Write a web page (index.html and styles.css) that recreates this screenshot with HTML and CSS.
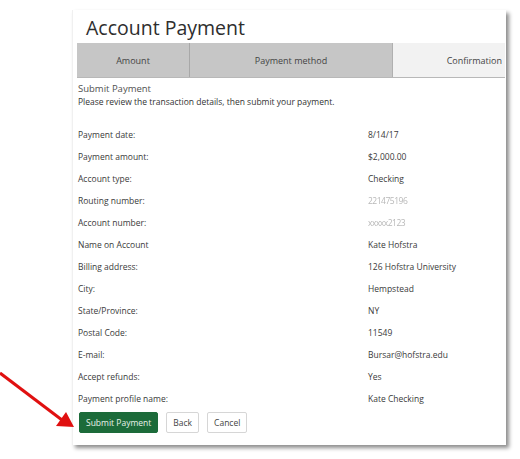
FILE: index.html
```html
<!DOCTYPE html>
<html lang="en">
<head>
<meta charset="utf-8">
<title>Account Payment</title>
<link rel="stylesheet" href="styles.css">
</head>
<body>
<div class="stage">
  <svg class="arrow" width="80" height="70" viewBox="0 0 80 70" aria-hidden="true">
    <line x1="0" y1="13" x2="62" y2="60" stroke="#e01010" stroke-width="3"/>
    <polygon points="74,67 56,66 66,52" fill="#e01010"/>
  </svg>
  <div class="card">
    <h1 class="title">Account Payment</h1>
    <div class="tabs">
      <div class="tab tab-amount">Amount</div>
      <div class="tab tab-method">Payment method</div>
      <div class="tab tab-confirm">Confirmation</div>
    </div>
    <div class="content">
      <h2 class="subtitle">Submit Payment</h2>
      <p class="intro">Please review the transaction details, then submit your payment.</p>
      <dl class="details">
        <dt>Payment date:</dt><dd>8/14/17</dd>
        <dt>Payment amount:</dt><dd>$2,000.00</dd>
        <dt>Account type:</dt><dd>Checking</dd>
        <dt>Routing number:</dt><dd><span class="blurred">221475196</span></dd>
        <dt>Account number:</dt><dd><span class="blurred">xxxxx2123</span></dd>
        <dt>Name on Account</dt><dd>Kate Hofstra</dd>
        <dt>Billing address:</dt><dd>126 Hofstra University</dd>
        <dt>City:</dt><dd>Hempstead</dd>
        <dt>State/Province:</dt><dd>NY</dd>
        <dt>Postal Code:</dt><dd>11549</dd>
        <dt>E-mail:</dt><dd>Bursar@hofstra.edu</dd>
        <dt>Accept refunds:</dt><dd>Yes</dd>
        <dt>Payment profile name:</dt><dd>Kate Checking</dd>
      </dl>
      <div class="actions">
        <button class="btn btn-primary">Submit Payment</button>
        <button class="btn">Back</button>
        <button class="btn">Cancel</button>
      </div>
    </div>
  </div>
</div>
</body>
</html>
```

FILE: styles.css
```css
html, body {
  margin: 0;
  padding: 0;
  background: #ffffff;
}
body {
  font-family: "Open Sans", "Noto Sans", sans-serif;
  color: #333333;
  width: 520px;
  height: 459px;
  overflow: hidden;
}
.stage {
  position: relative;
  padding: 10px 0 0 72px;
}
.arrow {
  position: absolute;
  left: 0;
  top: 360px;
}
.card {
  width: 434px;
  height: 435px;
  box-sizing: border-box;
  background: #ffffff;
  border-left: 1px solid #f0f0f0;
  box-shadow: 3px 3px 4px rgba(0, 0, 0, 0.45);
  padding: 0 1px 0 4px;
  display: flex;
  flex-direction: column;
}
.title {
  margin: 0;
  padding: 3px 0 0 9px;
  font-size: 19.5px;
  font-weight: 400;
  line-height: 30px;
  color: #2e2e2e;
}
.tabs {
  display: flex;
  height: 35px;
  border-bottom: 1px solid #b8b8b8;
  box-sizing: border-box;
}
.tab {
  display: flex;
  align-items: center;
  justify-content: center;
  font-size: 9px;
  color: #444444;
  box-sizing: border-box;
}
.tab-amount {
  width: 113px;
  background: #c6c6c6;
  border-right: 1px solid #a8a8a8;
}
.tab-method {
  width: 203px;
  background: #c6c6c6;
  border-right: 1px solid #b0b0b0;
}
.tab-confirm {
  flex: 1;
  background: #f2f2f2;
  justify-content: flex-end;
  padding-right: 3px;
}
.content {
  padding: 4px 0 0 1px;
}
.subtitle {
  margin: 0;
  font-size: 9.5px;
  font-weight: 400;
  line-height: 14px;
  color: #505050;
}
.intro {
  margin: 0;
  font-size: 8.5px;
  line-height: 12px;
  color: #333333;
}
.details {
  margin: 15px 0 0 0;
  display: grid;
  grid-template-columns: 290px 1fr;
  grid-auto-rows: 22px;
  align-items: center;
  font-size: 8.5px;
}
.details dt, .details dd {
  margin: 0;
  color: #3a3a3a;
}
.blurred {
  color: #b8b8b8;
  filter: blur(0.5px);
  letter-spacing: -0.5px;
}
.actions {
  display: flex;
  gap: 8px;
  margin-top: 3px;
  padding-left: 1px;
}
.btn {
  font-family: inherit;
  font-size: 8.5px;
  height: 21px;
  padding: 0 6px;
  border: 1px solid #d6d6d6;
  border-radius: 2px;
  background: #ffffff;
  color: #444444;
}
.btn-primary {
  background: #1c6b3a;
  border-color: #1c6b3a;
  color: #e8f2ea;
  padding: 0 6px;
}
```
